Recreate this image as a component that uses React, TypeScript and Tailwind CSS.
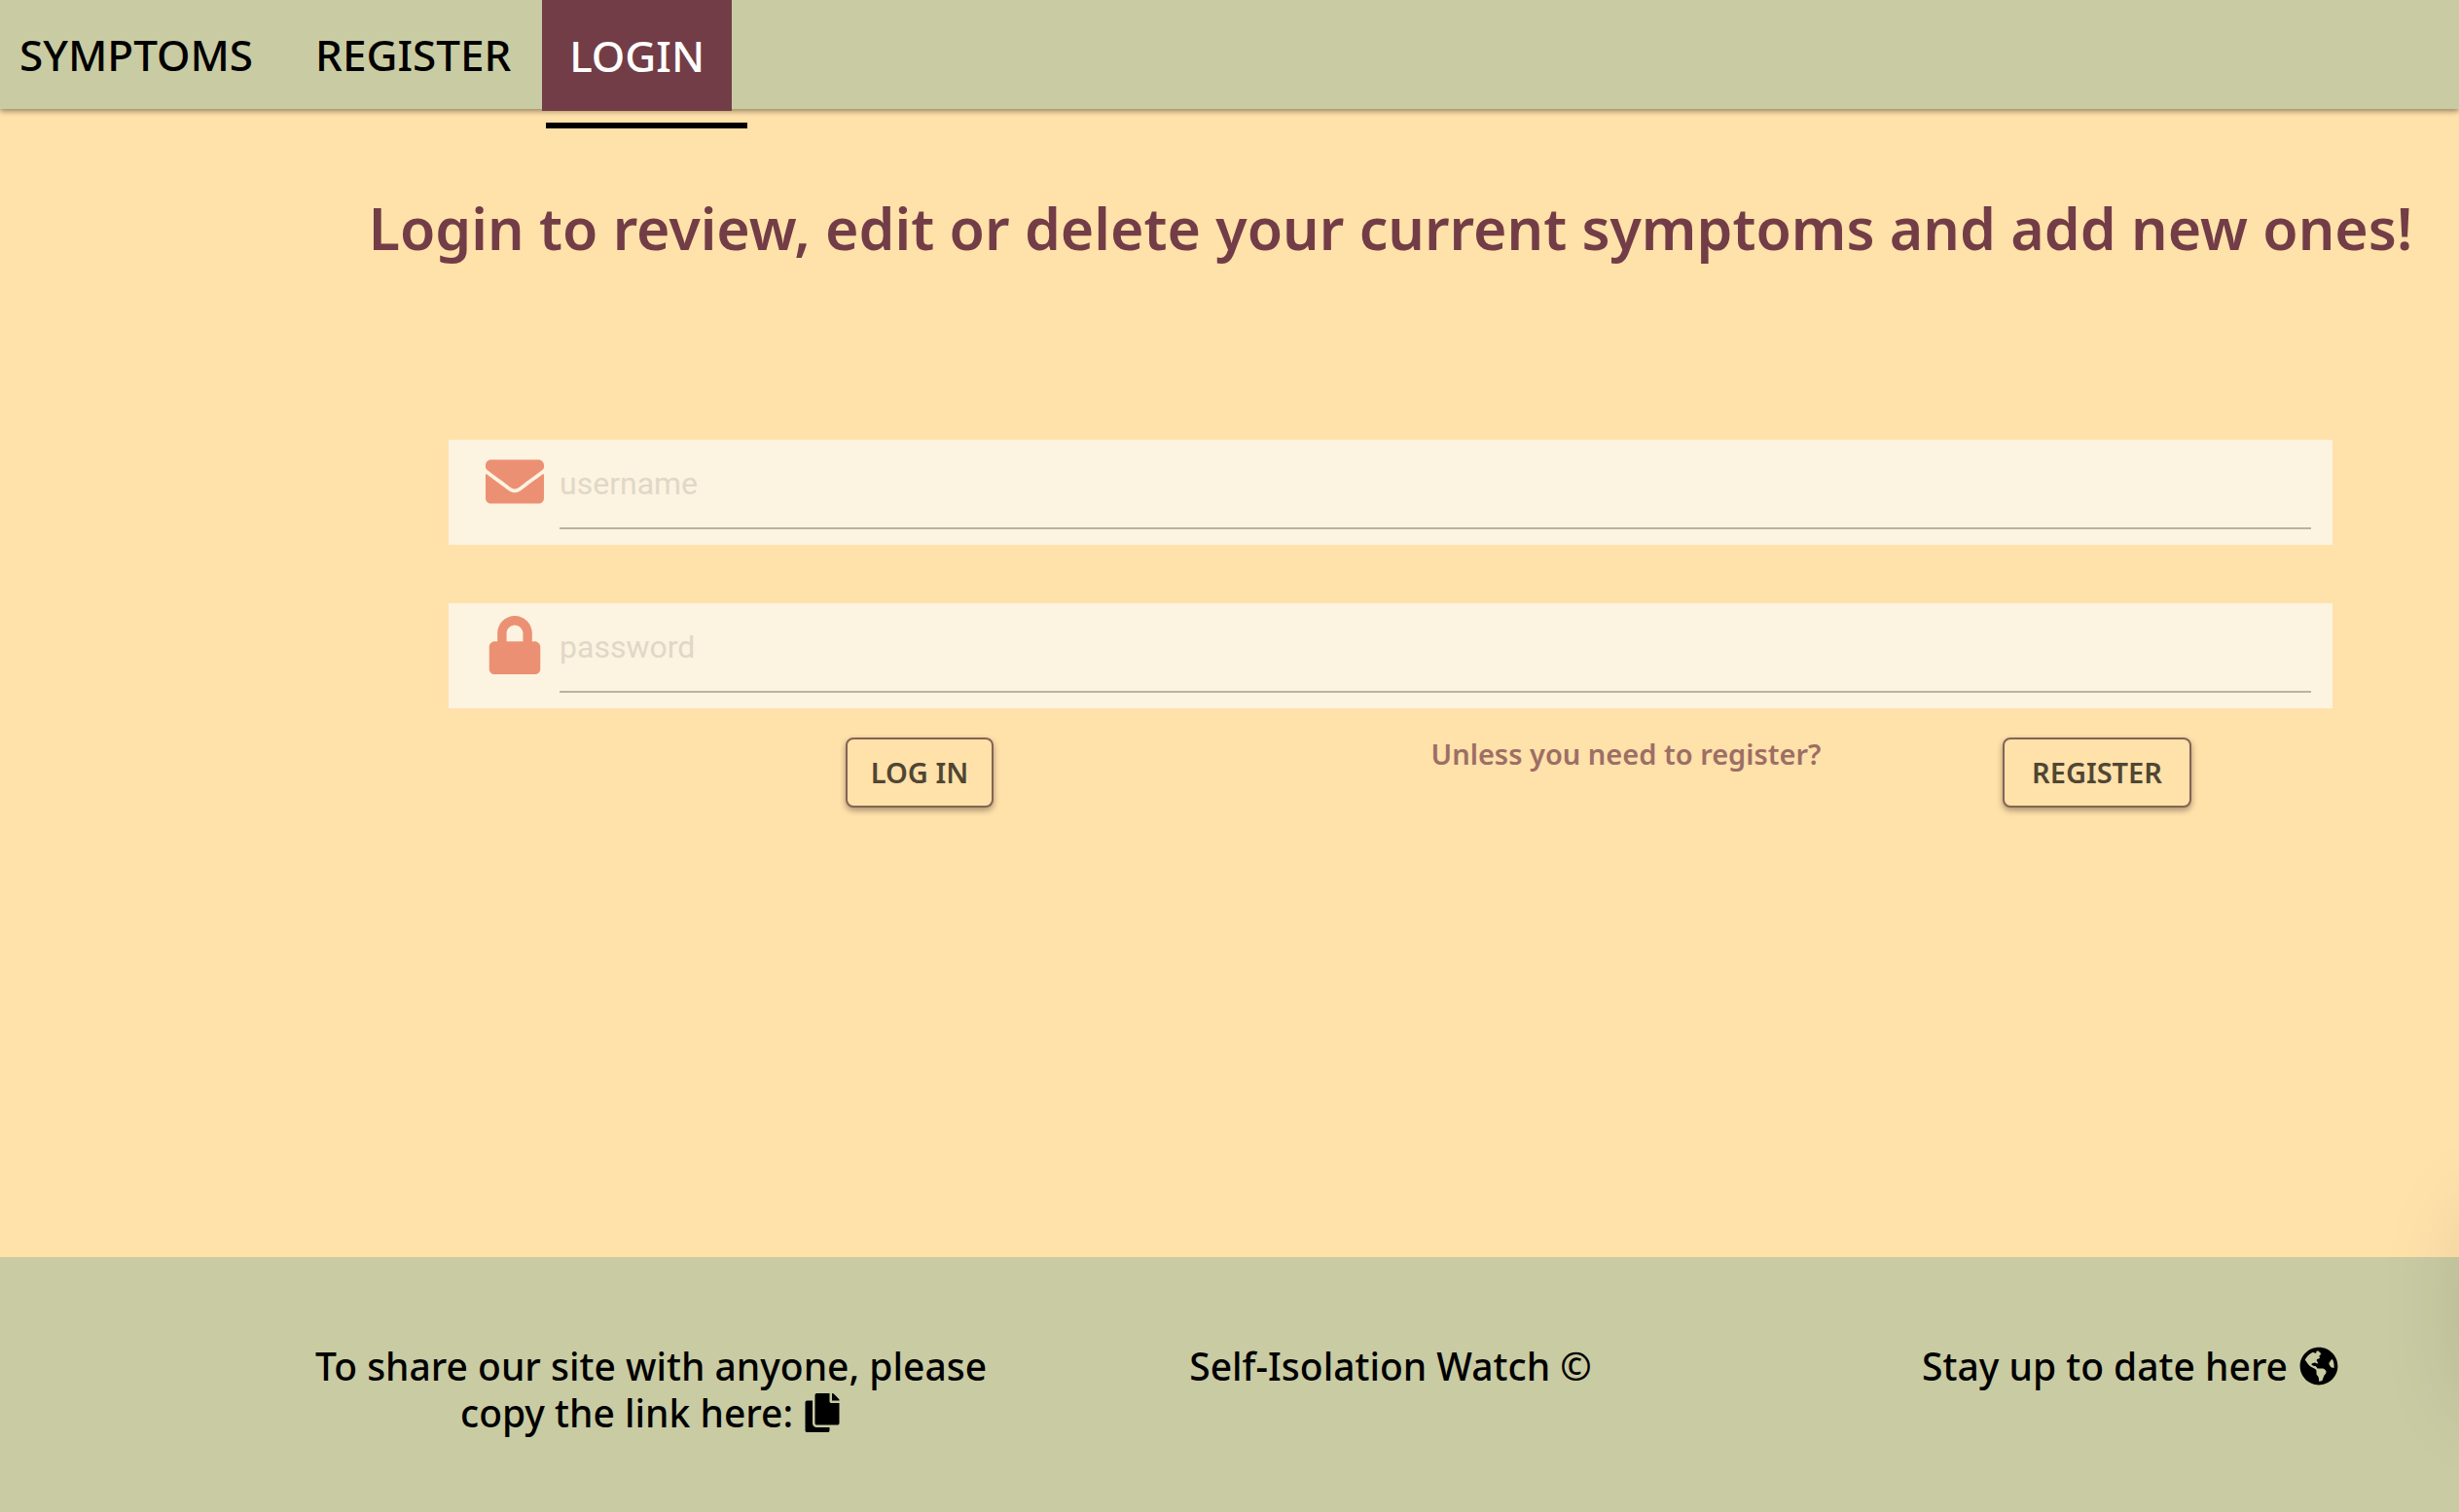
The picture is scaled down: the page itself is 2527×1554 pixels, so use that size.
import type { ReactNode } from 'react';
import { FaCopy, FaEnvelope, FaGlobeAmericas, FaLock } from 'react-icons/fa';

function NavLink({ children, active = false }: { children: ReactNode; active?: boolean }) {
  return (
    <a
      href="#"
      aria-current={active ? 'page' : undefined}
      className={
        active
          ? 'relative flex h-[114px] items-center bg-[#723d46] px-7 text-white'
          : 'flex h-28 items-center px-8 text-black'
      }
    >
      {children}
      {active && <span className="absolute top-[126px] -right-4 left-1 h-1.5 bg-black" />}
    </a>
  );
}

function Field({ id, type, label, icon }: { id: string; type: string; label: string; icon: ReactNode }) {
  return (
    <div className="flex h-[108px] items-start bg-[#fdf3e1] pr-[22px] pl-[38px]">
      <label htmlFor={id} className="flex h-[86px] w-[76px] shrink-0 items-center text-[60px] text-[#ec9073]">
        {icon}
      </label>
      <input
        id={id}
        type={type}
        aria-label={label}
        placeholder={label}
        className="h-[92px] min-w-0 flex-1 border-b-2 border-[#bcb19e] bg-transparent font-['Roboto',sans-serif] text-[32px] text-[#4f4633] outline-none placeholder:text-[#e0d8c7]"
      />
    </div>
  );
}

function OutlinedButton({ children, type = 'button' }: { children: ReactNode; type?: 'button' | 'submit' }) {
  return (
    <button
      type={type}
      className={`flex h-[72px] items-center justify-center rounded-lg border-2 border-[#836454] bg-[#ffe1aa] text-[29px] font-semibold text-[#4f4633] shadow-[0_3px_6px_rgba(0,0,0,0.35)] ${
        type === 'submit' ? 'px-6' : 'px-7'
      }`}
    >
      {children}
    </button>
  );
}

export default function App() {
  return (
    <div className="relative flex min-h-screen flex-col overflow-hidden bg-[#ffe1aa] font-['Noto_Sans',sans-serif]">
      <header className="h-28 bg-[#c9cba3] shadow-[0_2px_6px_rgba(0,0,0,0.45)]">
        <nav className="-ml-3 flex items-start text-[44px] font-medium">
          <NavLink>SYMPTOMS</NavLink>
          <NavLink>REGISTER</NavLink>
          <NavLink active>LOGIN</NavLink>
        </nav>
      </header>

      <main className="flex-1 pt-[84px] pl-[331px]">
        <h1 className="text-center text-[59px] leading-[76px] font-semibold whitespace-nowrap text-[#723d46]">
          Login to review, edit or delete your current symptoms and add new ones!
        </h1>
        <form className="mx-[130px] mt-[180px] flex flex-col gap-[60px]">
          <Field id="username" type="text" label="username" icon={<FaEnvelope />} />
          <Field id="password" type="password" label="password" icon={<FaLock />} />
          <div className="-mt-[30px] grid grid-cols-4">
            <div className="col-span-2 flex justify-center">
              <OutlinedButton type="submit">LOG IN</OutlinedButton>
            </div>
            <p className="text-center text-[29px] leading-[34px] font-semibold whitespace-nowrap text-[#9d6e65]">
              Unless you need to register?
            </p>
            <div className="flex justify-center">
              <OutlinedButton>REGISTER</OutlinedButton>
            </div>
          </div>
        </form>
      </main>

      <footer className="grid h-[262px] grid-cols-3 gap-[84px] bg-[#c9cba3] pt-[88px] pl-[331px] text-[39px] leading-[48px] font-medium whitespace-nowrap text-black">
        <div className="flex flex-col items-center">
          <span>To share our site with anyone, please</span>
          <span className="flex items-center gap-2.5">
            copy the link here:
            <button type="button" aria-label="Copy link">
              <FaCopy className="size-10" />
            </button>
          </span>
        </div>
        <p className="text-center">Self-Isolation Watch ©</p>
        <p className="flex items-start justify-center gap-3">
          Stay up to date here
          <a href="#" aria-label="Latest news" className="pt-1">
            <FaGlobeAmericas className="size-10" />
          </a>
        </p>
      </footer>

      {/* Soft shadow cast by a panel parked outside the right edge */}
      <div className="pointer-events-none absolute -right-[120px] bottom-[114px] h-[190px] w-[100px] shadow-[0_0_100px_rgba(0,0,0,0.15)]" />
    </div>
  );
}
